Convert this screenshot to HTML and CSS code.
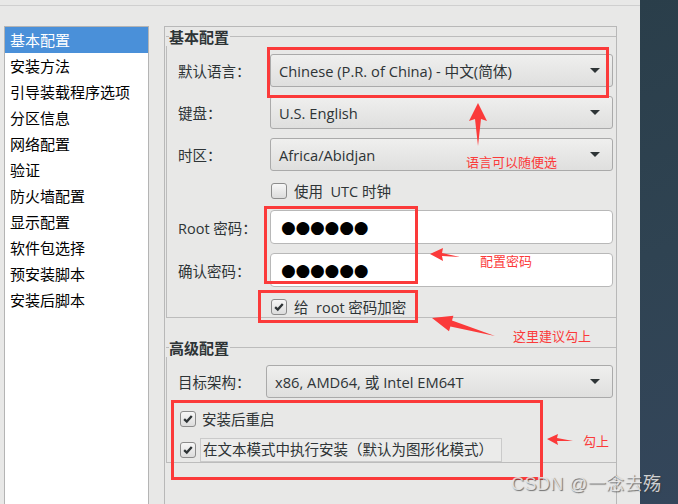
FILE: index.html
```html
<!DOCTYPE html>
<html lang="zh-CN">
<head>
    <meta charset="UTF-8">
    <meta name="viewport" content="width=device-width, initial-scale=1.0">
    <title>Kickstart 基本配置</title>
    <link rel="stylesheet" href="styles.css">
</head>
<body>
    <div class="screen">
        <div class="desk">
            <div class="topline"></div>
            <div class="main">
                <ul class="nav">
                    <li class="active">基本配置</li>
                    <li>安装方法</li>
                    <li>引导装载程序选项</li>
                    <li>分区信息</li>
                    <li>网络配置</li>
                    <li>验证</li>
                    <li>防火墙配置</li>
                    <li>显示配置</li>
                    <li>软件包选择</li>
                    <li>预安装脚本</li>
                    <li>安装后脚本</li>
                </ul>

                <div class="panel">
                    <section class="group">
                        <div class="group-title">基本配置</div>
                        <div class="group-body">
                            <div class="row">
                                <span class="label">默认语言：</span>
                                <div class="combo"><span>Chinese (P.R. of China) - 中文(简体)</span><i class="caret"></i></div>
                            </div>
                            <div class="row">
                                <span class="label">键盘：</span>
                                <div class="combo"><span>U.S. English</span><i class="caret"></i></div>
                            </div>
                            <div class="row">
                                <span class="label">时区：</span>
                                <div class="combo"><span>Africa/Abidjan</span><i class="caret"></i></div>
                            </div>
                            <label class="check-row utc">
                                <span class="check"></span>
                                <span>使用 &nbsp;UTC 时钟</span>
                            </label>
                            <div class="row entry-row">
                                <span class="label">Root 密码：</span>
                                <div class="entry">●●●●●●</div>
                            </div>
                            <div class="row entry-row">
                                <span class="label">确认密码：</span>
                                <div class="entry">●●●●●●</div>
                            </div>
                            <label class="check-row encrypt">
                                <span class="check on"></span>
                                <span>给 &nbsp;root 密码加密</span>
                            </label>
                        </div>
                    </section>

                    <section class="group adv">
                        <div class="group-title">高级配置</div>
                        <div class="group-body">
                            <div class="row">
                                <span class="label">目标架构：</span>
                                <div class="combo"><span>x86, AMD64, 或 Intel EM64T</span><i class="caret"></i></div>
                            </div>
                            <label class="check-row reboot">
                                <span class="check on"></span>
                                <span>安装后重启</span>
                            </label>
                            <label class="check-row textmode">
                                <span class="check on"></span>
                                <span class="focus">在文本模式中执行安装（默认为图形化模式）</span>
                            </label>
                        </div>
                    </section>
                </div>
            </div>
        </div>
        <div class="side"></div>

        <!-- 截图上的红色标注 -->
        <div class="notes">
            <div class="mark m1"></div>
            <div class="mark m2"></div>
            <div class="mark m3"></div>
            <div class="mark m4"></div>
            <svg class="arrows" width="678" height="504" viewBox="0 0 678 504">
                <polygon points="478,103 487,121 481,119 478,146 475,119 469,121"/>
                <polygon points="430,254 443,248 442,253 460,257 442,256 443,261"/>
                <polygon points="432,318 453.4,315.8 452,320.6 495,336 450.4,326.4 449,331.2"/>
                <polygon points="547,439 558,434 557,438 573,441 557,441 558,445"/>
            </svg>
            <span class="note n1">语言可以随便选</span>
            <span class="note n2">配置密码</span>
            <span class="note n3">这里建议勾上</span>
            <span class="note n4">勾上</span>
            <span class="watermark">CSDN @一念去殇</span>
        </div>
    </div>
</body>
</html>
```

FILE: styles.css
```css
* {
    box-sizing: border-box;
}
body {
    margin: 0;
    font-family: "Open Sans", "Noto Sans CJK SC", sans-serif;
    color: #2e3436;
}
.screen {
    position: relative;
    display: flex;
    width: 678px;
    height: 504px;
    overflow: hidden;
}
.desk {
    width: 640px;
    background: #e8e8e7;
    display: flex;
    flex-direction: column;
}
.topline {
    height: 6px;
    border-bottom: 1px solid #cfcfcf;
}
.main {
    flex: 1;
    display: flex;
    gap: 15px;
    padding: 20px 0 0 4px;
    min-height: 0;
}
.side {
    flex: 1;
    background: linear-gradient(160deg, #2a3e4a 0%, #2f4352 50%, #34465b 100%);
}

/* 左侧列表 */
.nav {
    width: 145px;
    height: 500px;
    margin: 0;
    padding: 0;
    list-style: none;
    background: #fff;
    border: 1px solid #b4b4b4;
    font-family: "Noto Sans CJK SC", sans-serif;
    font-size: 15px;
    color: #000;
}
.nav li {
    height: 26px;
    line-height: 25px;
    padding-left: 5px;
}
.nav li.active {
    background: #4a90d9;
    color: #fff;
}

/* 右侧面板 */
.panel {
    width: 453px;
    height: 500px;
    border: 1px solid #b8b8b8;
    border-bottom: none;
    padding-left: 1px;
}
.group-title {
    display: flex;
    align-items: center;
    height: 19px;
    font-family: "Noto Sans CJK SC", sans-serif;
    font-weight: bold;
    font-size: 15px;
    color: #2e3436;
}
.group-title::before,
.group-title::after {
    content: "";
    border-top: 1px solid #bcbcbc;
}
.group-title::before {
    width: 3px;
}
.group-title::after {
    flex: 1;
    margin-left: 1px;
}
.group-body {
    border-left: 1px solid #bcbcbc;
    border-bottom: 1px solid #bcbcbc;
    padding: 8px 3px 0 11px;
}
.adv {
    margin-top: 20px;
}
.adv .group-body {
    padding-top: 8px;
}

.row {
    display: flex;
    align-items: center;
    height: 33px;
    margin-bottom: 9px;
    font-size: 14.5px;
}
.label {
    width: 92px;
    flex: none;
}
.adv .label {
    width: 88px;
}
.combo {
    flex: 1;
    height: 33px;
    display: flex;
    align-items: center;
    justify-content: space-between;
    padding: 0 12px 0 8px;
    border: 1px solid #aaaaaa;
    border-radius: 3px;
    background: linear-gradient(#efefee, #dfdfde);
    color: #2e3436;
    font-size: 14.7px;
}
.caret {
    width: 0;
    height: 0;
    border-left: 5px solid transparent;
    border-right: 5px solid transparent;
    border-top: 5px solid #2e3436;
}
.entry-row {
    height: 34px;
}
.entry {
    flex: 1;
    height: 34px;
    display: flex;
    align-items: center;
    padding-left: 10px;
    background: #fff;
    border: 1px solid #b8b8b8;
    border-radius: 4px;
    font-family: "DejaVu Sans", sans-serif;
    font-size: 17px;
    letter-spacing: -0.3px;
    color: #000;
}

.check-row {
    display: flex;
    align-items: center;
    gap: 7px;
    height: 21px;
    margin-bottom: 9px;
    font-size: 14.5px;
}
.utc {
    margin-left: 93px;
}
.encrypt {
    margin-left: 93px;
    margin-bottom: 0;
}
.adv .check-row {
    margin-left: 2px;
    gap: 6px;
}
.reboot {
    margin-top: 10px;
}
.adv .textmode {
    height: 24px;
    margin: 7px 0 0 2px;
    gap: 4px;
}
.check {
    width: 16px;
    height: 16px;
    flex: none;
    border: 1px solid #8c8c8c;
    border-radius: 3px;
    background: linear-gradient(#f7f7f7, #dcdcdc);
}
.check.on {
    background: url("data:image/svg+xml,%3Csvg xmlns='http://www.w3.org/2000/svg' viewBox='0 0 16 16'%3E%3Cpath d='M3.6 8.2 6.6 11 12.3 4.6' fill='none' stroke='%232e3436' stroke-width='2.6'/%3E%3C/svg%3E") center/14px no-repeat, linear-gradient(#f7f7f7, #dcdcdc);
}
.focus {
    height: 24px;
    line-height: 22px;
    padding: 0 8px 0 2px;
    border: 1px solid #cacaca;
    background: #ebebea;
}

/* 红色标注 */
.notes {
    position: absolute;
    inset: 0;
    pointer-events: none;
}
.mark {
    position: absolute;
    border: 3px solid #fb3a3a;
}
.m1 { left: 267px; top: 47px;  width: 342px; height: 51px; }
.m2 { left: 264px; top: 206px; width: 154px; height: 78px; }
.m3 { left: 258px; top: 290px; width: 160px; height: 33px; }
.m4 { left: 171px; top: 400px; width: 372px; height: 80px; }
.arrows {
    position: absolute;
    left: 0;
    top: 0;
}
.arrows polygon {
    fill: #fb3a3a;
}
.note {
    position: absolute;
    font-family: "Noto Sans CJK SC", sans-serif;
    font-size: 13px;
    line-height: 16px;
    color: #fb3a3a;
}
.n1 { left: 466px; top: 154px; }
.n2 { left: 480px; top: 253px; }
.n3 { left: 513px; top: 328px; }
.n4 { left: 583px; top: 433px; }
.watermark {
    position: absolute;
    left: 511px;
    top: 473px;
    font-family: "Liberation Sans", "Noto Sans CJK SC", sans-serif;
    font-size: 18px;
    line-height: 22px;
    letter-spacing: 0.4px;
    color: rgba(235, 235, 235, 0.85);
    text-shadow: 1px 1px 1px rgba(60, 60, 60, 0.7);
}
```
